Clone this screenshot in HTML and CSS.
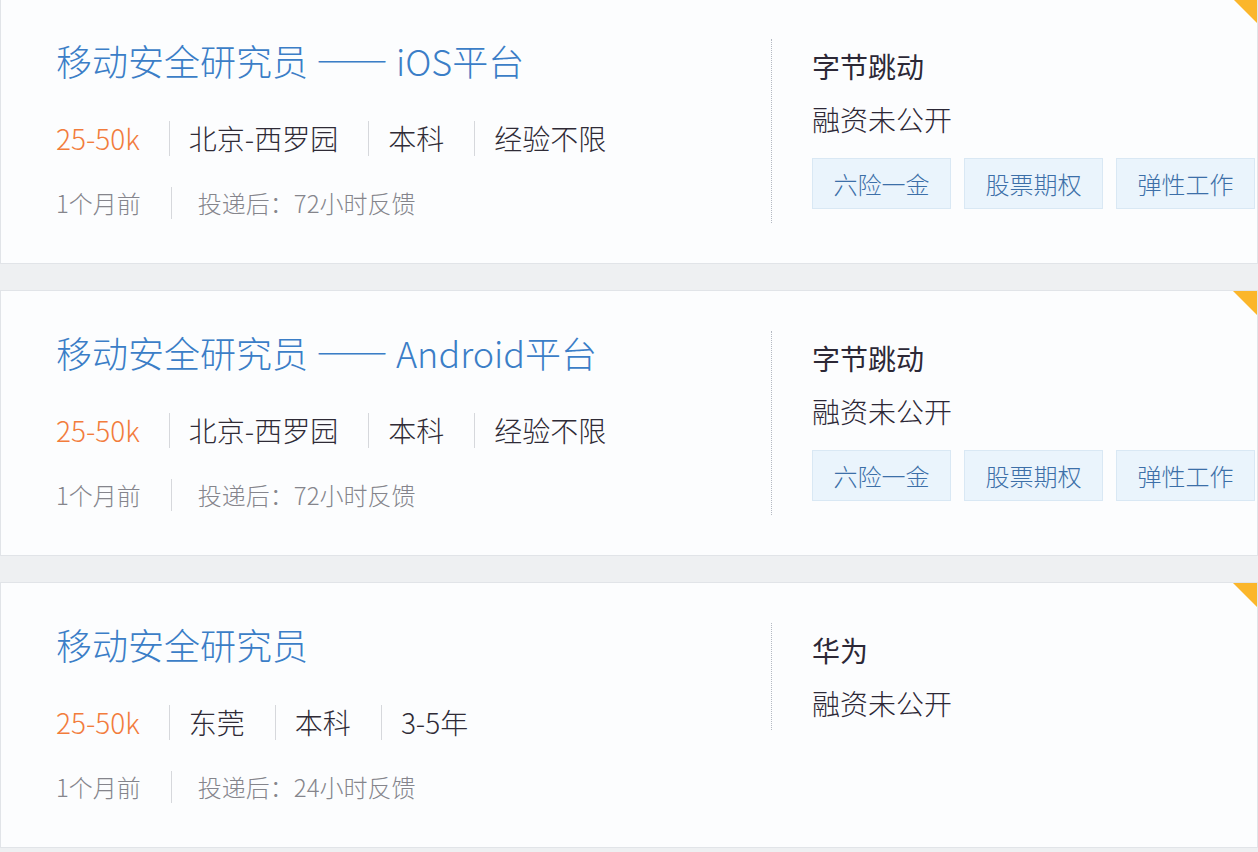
FILE: index.html
```html
<!DOCTYPE html>
<html lang="zh-CN">
<head>
    <meta charset="UTF-8">
    <meta name="viewport" content="width=device-width, initial-scale=1.0">
    <link rel="stylesheet" href="styles.css">
    <title>职位列表</title>
</head>
<body>

    <div class="job-list">

        <div class="job-card">
            <span class="corner"></span>
            <div class="job-main">
                <h3 class="job-title">移动安全研究员 —— iOS平台</h3>
                <ul class="job-info">
                    <li class="salary">25-50k</li>
                    <li>北京-西罗园</li>
                    <li>本科</li>
                    <li>经验不限</li>
                </ul>
                <ul class="job-meta">
                    <li>1个月前</li>
                    <li>投递后：72小时反馈</li>
                </ul>
            </div>
            <div class="job-company">
                <div class="company-name">字节跳动</div>
                <div class="company-stage">融资未公开</div>
                <div class="tags">
                    <span class="tag">六险一金</span>
                    <span class="tag">股票期权</span>
                    <span class="tag">弹性工作</span>
                </div>
            </div>
        </div>

        <div class="job-card">
            <span class="corner"></span>
            <div class="job-main">
                <h3 class="job-title">移动安全研究员 —— Android平台</h3>
                <ul class="job-info">
                    <li class="salary">25-50k</li>
                    <li>北京-西罗园</li>
                    <li>本科</li>
                    <li>经验不限</li>
                </ul>
                <ul class="job-meta">
                    <li>1个月前</li>
                    <li>投递后：72小时反馈</li>
                </ul>
            </div>
            <div class="job-company">
                <div class="company-name">字节跳动</div>
                <div class="company-stage">融资未公开</div>
                <div class="tags">
                    <span class="tag">六险一金</span>
                    <span class="tag">股票期权</span>
                    <span class="tag">弹性工作</span>
                </div>
            </div>
        </div>

        <div class="job-card">
            <span class="corner"></span>
            <div class="job-main">
                <h3 class="job-title">移动安全研究员</h3>
                <ul class="job-info">
                    <li class="salary">25-50k</li>
                    <li>东莞</li>
                    <li>本科</li>
                    <li>3-5年</li>
                </ul>
                <ul class="job-meta">
                    <li>1个月前</li>
                    <li>投递后：24小时反馈</li>
                </ul>
            </div>
            <div class="job-company">
                <div class="company-name">华为</div>
                <div class="company-stage">融资未公开</div>
            </div>
        </div>

    </div>

</body>
</html>
```

FILE: styles.css
```css
body {
    margin: 0;
    background-color: #eef0f2;
    font-family: "Noto Sans CJK SC", "Microsoft YaHei", sans-serif;
    font-weight: 300;
    overflow: hidden;
}

.job-list {
    display: flex;
    flex-direction: column;
    gap: 26px;
    margin-top: -2px;
}

.job-card {
    position: relative;
    display: flex;
    align-items: flex-start;
    height: 264px;
    background-color: #fcfdfe;
    border: 1px solid #e1e4e8;
    overflow: hidden;
}

.corner {
    position: absolute;
    top: 0;
    right: 0;
    width: 0;
    height: 0;
    border-top: 24px solid #fbb62b;
    border-left: 24px solid transparent;
}

/* left column */
.job-main {
    width: 715px;
    padding: 37px 0 0 55px;
    flex-shrink: 0;
}

.job-title {
    margin: 0;
    font-size: 36px;
    font-weight: 300;
    line-height: 48px;
    color: #3b7ec7;
    white-space: nowrap;
}

.job-info,
.job-meta {
    display: flex;
    list-style: none;
    margin: 0;
    padding: 0;
}

.job-info {
    margin-top: 37px;
}

.job-info li {
    font-size: 28px;
    line-height: 35px;
    color: #2f2b36;
    padding: 0 30px 0 19px;
    border-right: 1px solid #d6d8dc;
}

.job-info li:first-child {
    padding-left: 0;
    padding-right: 29px;
}

.job-info li:last-child {
    border-right: none;
}

.job-info .salary {
    color: #f27c3c;
}

.job-meta {
    margin-top: 31px;
}

.job-meta li {
    font-size: 24px;
    line-height: 32px;
    color: #85858c;
    padding: 0 25px 0 26px;
    border-right: 1px solid #d6d8dc;
}

.job-meta li:first-child {
    padding-left: 0;
    padding-right: 30px;
}

.job-meta li:last-child {
    border-right: none;
}

/* right column */
.job-company {
    margin-top: 40px;
    padding: 7px 0 7px 40px;
    border-left: 1px dotted #b4b9c2;
}

.company-name,
.company-stage {
    font-size: 28px;
    line-height: 40px;
    color: #2c2836;
    white-space: nowrap;
}

.company-name {
    font-weight: 400;
}

.company-stage {
    margin-top: 13px;
}

.tags {
    display: flex;
    gap: 13px;
    margin: 19px 0 7px;
}

.tag {
    width: 137px;
    flex-shrink: 0;
    text-align: center;
    font-size: 24px;
    line-height: 49px;
    color: #3c6fa8;
    background-color: #eaf4fc;
    border: 1px solid #d9e8f4;
}
```
